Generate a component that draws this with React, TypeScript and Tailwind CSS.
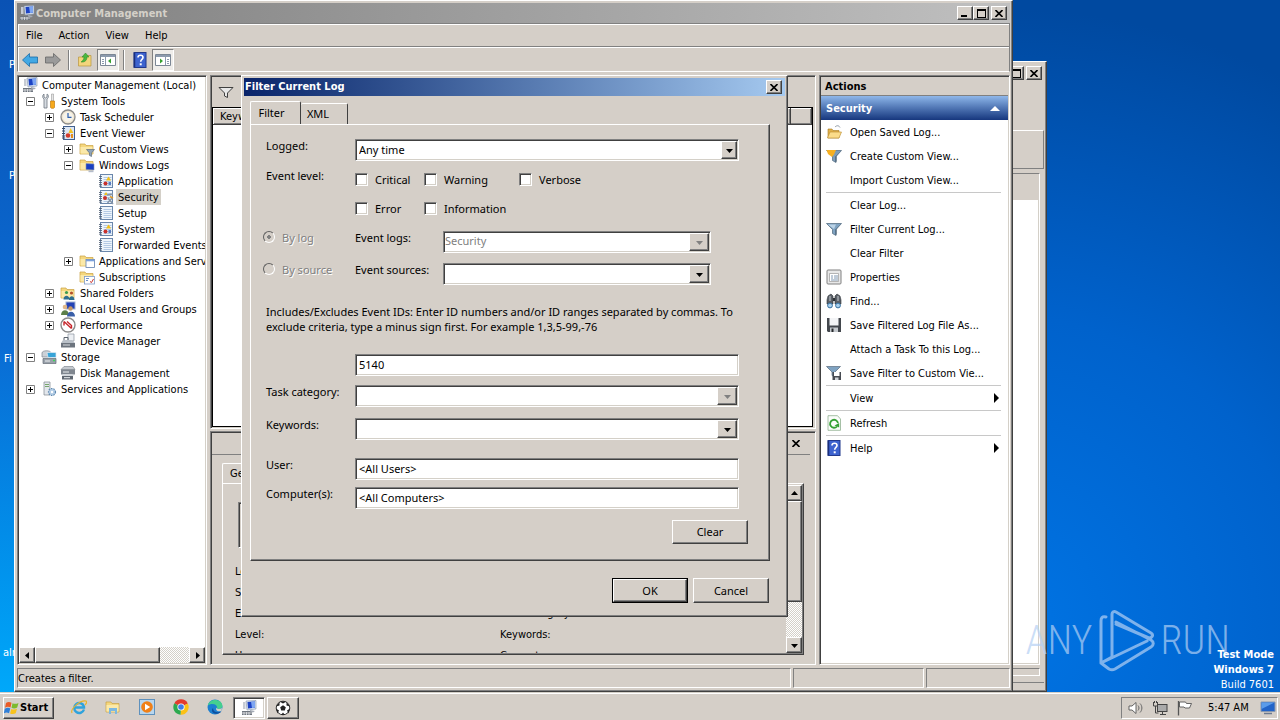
import { useState, type ReactNode } from 'react'

const raised =
  'bg-[#d5cfc8] border border-t-white border-l-white border-b-[#404040] border-r-[#404040] shadow-[inset_-1px_-1px_0_#808080]'
const sunken =
  'border border-t-[#808080] border-l-[#808080] border-b-white border-r-white shadow-[inset_1px_1px_0_#404040,inset_-1px_-1px_0_#d4d0c8]'

/* ---------- Icons ---------- */

function Svg({ children, size = 16 }: { children: ReactNode; size?: number }) {
  return (
    <svg width={size} height={size} viewBox="0 0 16 16" fill="none" className="shrink-0" aria-hidden="true">
      {children}
    </svg>
  )
}

const folder = (
  <>
    <path d="M1 3h5l1 1.5h7V13H1z" fill="#f5d77e" stroke="#c9a042" strokeWidth=".7" />
    <path d="M1.5 6h12v6.6h-12z" fill="#fbe9a9" />
  </>
)

const funnel = (fill: string) => (
  <>
    <path d="M.5 2.500h15l-5.500 6v6l-3.500-2V8.500z" fill={fill} stroke="#5b7286" strokeWidth=".8" />
    <path d="M9.500 8.500v5.500l1-.5V8l4-4.500z" fill="#3f566b" />
  </>
)

const logBook = (
  <>
    <rect x="2.5" y="1.5" width="12" height="13" fill="#eef5fc" stroke="#6b87ab" />
    <path d="M5.5 4.5h8M5.5 6.5h8M5.5 8.5h8M5.5 10.5h8M5.5 12.5h8" stroke="#a5bfdd" strokeWidth=".8" />
    <path d="M1 3.5h3M1 5.5h3M1 7.5h3M1 9.5h3M1 11.5h3M1 13.2h3" stroke="#4a5a70" strokeWidth=".8" />
  </>
)

const icons: Record<string, ReactNode> = {
  computer: (
    <>
      <path d="M5 1l10-.5V9L6 10z" fill="#d9e3f0" stroke="#8090a8" strokeWidth=".6" />
      <path d="M6.5 2l7.5-.4v6.2L7 8.6z" fill="#1c43c4" />
      <path d="M10 1.8l4-.2v6.2L11 8z" fill="#7ea6f2" />
      <path d="M2 2h2.5v7H2z" fill="#c7ccd4" />
      <path d="M1 11h10v4H1z" fill="#6f767f" />
      <path d="M3 12v3M5.5 12v3M8 12v3M1 13h10" stroke="#e4e6e9" strokeWidth=".8" />
      <path d="M9 10l5 1-2 1.4-3-.8z" fill="#a4abb5" />
    </>
  ),
  tools: (
    <>
      <path d="M3 1v3l1.5 1L6 4V1c1.8.8 2 3.500 0 5v9H3V6C1.200 5 1.200 2 3 1z" fill="#d7dce2" stroke="#6f7781" strokeWidth=".8" />
      <path d="M10.500 1h2v7h-2z" fill="#e6e6e6" stroke="#8b8b8b" strokeWidth=".5" />
      <path d="M9.500 8h4v6.500l-1 .8h-2l-1-.8z" fill="#f6a91b" stroke="#b86f00" strokeWidth=".6" />
    </>
  ),
  clock: (
    <>
      <circle cx="8" cy="8" r="7" fill="#efe6d2" stroke="#8a8a8a" strokeWidth="1.300" />
      <circle cx="8" cy="8" r="5" fill="#f6f3ea" />
      <path d="M8 4v4.300h3.500" stroke="#2c5fae" strokeWidth="1.200" />
    </>
  ),
  eventViewer: (
    <>
      <rect x="3.500" y="1.500" width="11" height="13" fill="#dbe6f5" stroke="#41608f" />
      <path d="M2 3.500h3M2 6h3M2 8.500h3M2 11h3M2 13h3" stroke="#3c4c62" />
      <circle cx="8" cy="10.500" r="2.300" fill="#d33a2c" />
      <path d="M10.500 3l3 5h-5z" fill="#f4c322" />
      <path d="M11 9h2v4h-2z" fill="#e48f1f" />
    </>
  ),
  customViews: (
    <>
      {folder}
      <path d="M7.500 8.500h8L12.500 12v3.500l-2-1V12z" fill="#8fa3b8" stroke="#4f6072" strokeWidth=".6" />
    </>
  ),
  windowsLogs: (
    <>
      {folder}
      <path d="M7 6.500l8 .5v6l-8-.5z" fill="#1a3fc2" stroke="#8796b5" strokeWidth=".6" />
      <path d="M9.500 13.500h5v1.700h-5z" fill="#b4bccb" />
    </>
  ),
  log: (
    <>
      {logBook}
      <circle cx="7.500" cy="10.500" r="2" fill="#c9302c" />
      <path d="M10.500 3.500l2.600 4H8z" fill="#f2c018" />
      <path d="M10.500 9h2.500v3h-2.500z" fill="#5a7dc0" />
    </>
  ),
  security: (
    <>
      {logBook}
      <circle cx="7" cy="9" r="2" fill="#c9302c" />
      <path d="M8 3l2 3H6z" fill="#f2c018" />
      <path d="M9 6l6-1M9.500 14l5-5.500M10 9l5 6" stroke="#8796a8" strokeWidth="1.500" />
      <path d="M12 7.500l3 1.500" stroke="#e09a2a" strokeWidth="1.500" />
    </>
  ),
  logPlain: logBook,
  appLogs: (
    <>
      {folder}
      <rect x="7" y="6.500" width="8.500" height="8" fill="#fff" stroke="#5f7fb0" strokeWidth=".8" />
      <path d="M7 7.500h8.500" stroke="#7ba0dc" strokeWidth="1.600" />
    </>
  ),
  subscriptions: (
    <>
      {folder}
      <rect x="5.500" y="7.500" width="10" height="7.500" fill="#fff" stroke="#7f9cc8" strokeWidth=".8" />
      <path d="M7 9.500h3M7 11.500h2" stroke="#6d92cc" />
      <path d="M11 12.500l1.500 1L14.500 10" stroke="#c9302c" />
    </>
  ),
  sharedFolders: (
    <>
      {folder}
      <circle cx="6.500" cy="7.500" r="1.600" fill="#3f9b4c" />
      <circle cx="11.500" cy="8" r="1.600" fill="#b4502b" />
      <path d="M3.500 14.500c0-5 6-5 6 0zM9 15c0-5 5.500-5 5.500 0z" fill="#2e6f8f" />
    </>
  ),
  users: (
    <>
      <rect x="6" y="1" width="9" height="7" fill="#2443b6" stroke="#a3b1cf" />
      <circle cx="5" cy="6" r="2.300" fill="#e0b88a" />
      <circle cx="10.500" cy="7.500" r="2.200" fill="#c79966" />
      <path d="M1 14c0-6.500 8-6.500 8 0z" fill="#5c7f48" />
      <path d="M7 15.500c0-6.500 8-6.500 8 0z" fill="#3a5fa8" />
    </>
  ),
  performance: (
    <>
      <circle cx="8" cy="8" r="7" fill="#fff" stroke="#8a8a8a" strokeWidth="1.400" />
      <path d="M4 4.500v4M4 4.500l7.500 7M7 4.500l4.500 4v3" stroke="#c7262b" strokeWidth="1.400" />
    </>
  ),
  device: (
    <>
      <path d="M8 1h6v7H8z" fill="#eceff3" stroke="#8b939d" strokeWidth=".7" />
      <path d="M3 7h9l3 3H1z" fill="#b9c0c8" />
      <path d="M1 10h14v4.500H1z" fill="#6c747e" />
      <path d="M3 12h7" stroke="#d6dade" />
      <path d="M4 7V4.500h4V7" stroke="#5c646e" />
    </>
  ),
  storage: (
    <>
      <path d="M1 4c0-3 9-3 9 0v4H1z" fill="#ccd1d7" stroke="#7d858f" strokeWidth=".7" />
      <path d="M6 3.500h9v5H7z" fill="#38a4d8" stroke="#e3ebf2" strokeWidth=".7" />
      <path d="M2 9.500h13v5H2z" fill="#9aa2ab" stroke="#636b75" strokeWidth=".7" />
      <path d="M4 12h5" stroke="#eef0f2" />
      <path d="M12 11.500h2" stroke="#3fd35b" strokeWidth="1.300" />
    </>
  ),
  disk: (
    <>
      <path d="M4 1.500h9l2 3H1z" fill="#c4c9cf" stroke="#757d87" strokeWidth=".6" />
      <path d="M1 4.500h14v5H1z" fill="#7f868f" />
      <path d="M3 9h9l2 2H2z" fill="#d2d6db" />
      <path d="M2 11h11v3.500H2z" fill="#5e6670" />
      <path d="M3 7h6M4 12.700h6" stroke="#eceef0" />
    </>
  ),
  services: (
    <>
      <path d="M3 1h6v13H3z" fill="#e3e7ec" stroke="#808891" strokeWidth=".7" />
      <path d="M4 3.500h4M4 5.500h4" stroke="#77a66b" />
      <circle cx="11" cy="11" r="3.500" fill="#b3cde6" stroke="#6089b0" strokeWidth="1.200" strokeDasharray="1.500 1" />
      <circle cx="11" cy="11" r="1.200" fill="#fff" />
    </>
  ),
  openLog: (
    <>
      <path d="M2 5h4l1 1.500h6V14H2z" fill="#e0b04a" stroke="#a57a20" strokeWidth=".6" />
      <path d="M4 8h11.500L13 14H1.500z" fill="#fbdc8a" stroke="#b98c2e" strokeWidth=".6" />
      <path d="M9 3c2-2 4-1.500 5 .5" stroke="#8f9aa6" />
    </>
  ),
  createView: (
    <>
      {funnel('#7d9cb8')}
      <path d="M.5 2h9.500L8 6.500 6 9 2 6z" fill="#f7b021" />
    </>
  ),
  filter: (
    <>
      {funnel('#7fa3c2')}
      <path d="M2 3.500h8L8 8z" fill="#bcd3e6" />
    </>
  ),
  properties: (
    <>
      <rect x="1" y="1" width="14" height="14" rx="1" fill="#e8e8e8" stroke="#808080" />
      <path d="M3.500 4.500h9v8h-9z" fill="#fff" stroke="#9a9a9a" strokeWidth=".7" />
      <path d="M5 7h2M8 7h4M5 9h2M8 9h4M5 11h7" stroke="#5f7f9f" strokeWidth=".8" />
    </>
  ),
  find: (
    <>
      <path d="M2 3l3-2 2 2v8H1V7zM14 3l-3-2-2 2v8h6V7z" fill="#5a6068" stroke="#2d3238" strokeWidth=".6" />
      <path d="M7 5h2v3H7z" fill="#2d3238" />
      <path d="M4 3v5M12 3v5" stroke="#c7ccd2" />
      <circle cx="4" cy="12.500" r="2.400" fill="#a8d0ee" stroke="#326ea0" />
      <circle cx="12" cy="12.500" r="2.400" fill="#a8d0ee" stroke="#326ea0" />
    </>
  ),
  save: (
    <>
      <path d="M1 1h14v14H2l-1-1z" fill="#43474d" />
      <path d="M3.500 1h9v7.500h-9z" fill="#f3f4f6" />
      <path d="M4 10.500h8V15H4z" fill="#c5c9ce" />
      <path d="M5.500 11.500h2V15h-2z" fill="#25282c" />
    </>
  ),
  saveFilter: (
    <>
      <path d="M.5 1.500h14L9 7v5l-3-1.500V7z" fill="#7fa3c2" stroke="#5b6b7c" strokeWidth=".7" />
      <path d="M6.500 7h8.500v8H6.500z" fill="#474b52" />
      <path d="M8 7h5.500v4H8z" fill="#fff" />
      <path d="M9 12.500h3.500V15H9z" fill="#d0d4d9" />
    </>
  ),
  refresh: (
    <>
      <path d="M2 .7h9.500L14.500 4v11.300H2z" fill="#fbfdfb" stroke="#8fb08f" strokeWidth=".8" />
      <path d="M11 11.500a4 4 0 1 1 1-3.500" stroke="#35a135" strokeWidth="1.800" />
      <path d="M13.200 8v4.500L8.500 10.500z" fill="#35a135" />
    </>
  ),
  help: (
    <>
      <rect x="2" y=".5" width="12" height="15" fill="#3d63cf" stroke="#21388c" />
      <path d="M2.500 1v14" stroke="#1b2f7a" strokeWidth="1.500" />
      <path d="M6 5.500c0-3 5-3 5 0 0 2-2.300 1.800-2.300 4.200" stroke="#fff" strokeWidth="1.600" />
      <path d="M7.700 11.300h2v2h-2z" fill="#fff" />
    </>
  ),
  back: <path d="M.5 8L7.500 1.500V5H15.500v6H7.500v3.500z" fill="#42a8e4" stroke="#1a6ba6" strokeWidth=".8" />,
  forward: <path d="M15.500 8L8.500 1.500V5H.5v6h8v3.500z" fill="#9a9a9a" stroke="#666" strokeWidth=".8" />,
  upFolder: (
    <>
      <path d="M1.500 5h5l1-1.500H14V14H1.500z" fill="#f3d57c" stroke="#b9953f" strokeWidth=".7" />
      <path d="M4 10c1-1 3-2 3-5H5l3.500-4L12 5h-2c0 4-3 5.500-6 5z" fill="#49b83f" stroke="#2a8423" strokeWidth=".5" />
    </>
  ),
  paneLeft: (
    <>
      <path d="M.5 2.500h15v11H.5z" fill="#fff" stroke="#7c8795" />
      <path d="M1 4h14" stroke="#8c9aad" strokeWidth="2" />
      <path d="M5.500 5v8M2 7.500h2M2 9.500h2M2 11.500h2" stroke="#8c9aad" />
      <path d="M11 6.500v5L8 9z" fill="#36a12f" />
    </>
  ),
  paneRight: (
    <>
      <path d="M.5 2.500h15v11H.5z" fill="#fff" stroke="#7c8795" />
      <path d="M1 4h14" stroke="#8c9aad" strokeWidth="2" />
      <path d="M10.500 5v8M12 7.500h2M12 9.500h2M12 11.500h2" stroke="#8c9aad" />
      <path d="M5 6.500v5L8 9z" fill="#36a12f" />
    </>
  ),
}

function Icon({ name, size }: { name: string; size?: number }) {
  return <Svg size={size}>{icons[name]}</Svg>
}

function Arrow({ dir, color = '#000' }: { dir: 'up' | 'down' | 'left' | 'right'; color?: string }) {
  const paths = { up: 'M0 5h7L3.500 1z', down: 'M0 2h7L3.500 6z', left: 'M5 0v7L1 3.500z', right: 'M2 0v7l4-3.500z' }
  return (
    <svg width="7" height="7" viewBox="0 0 7 7" className="shrink-0" aria-hidden="true">
      <path d={paths[dir]} fill={color} />
    </svg>
  )
}

function Cross() {
  return (
    <svg width="8" height="7" viewBox="0 0 8 7" aria-hidden="true">
      <path d="M.5 0l7 7M7.500 0l-7 7" stroke="#000" strokeWidth="1.600" />
    </svg>
  )
}

/* ---------- Window parts ---------- */

function CaptionButton({ kind }: { kind: 'min' | 'max' | 'close' }) {
  return (
    <button type="button" aria-label={kind} className={`${raised} flex h-[14px] w-[16px] items-center justify-center`}>
      {kind === 'close' && <Cross />}
      {kind === 'max' && <span className="h-[9px] w-[9px] border border-t-2 border-black" />}
      {kind === 'min' && <span className="mt-[6px] mr-[2px] h-[2px] w-[6px] bg-black" />}
    </button>
  )
}

interface TreeNode {
  level: number
  label: string
  icon: string
  toggle?: '+' | '-'
}

const indents = ['pl-[3px]', 'pl-[7px]', 'pl-[26px]', 'pl-[45px]', 'pl-[64px]']

const tree: TreeNode[] = [
  { level: 0, label: 'Computer Management (Local)', icon: 'computer' },
  { level: 1, label: 'System Tools', icon: 'tools', toggle: '-' },
  { level: 2, label: 'Task Scheduler', icon: 'clock', toggle: '+' },
  { level: 2, label: 'Event Viewer', icon: 'eventViewer', toggle: '-' },
  { level: 3, label: 'Custom Views', icon: 'customViews', toggle: '+' },
  { level: 3, label: 'Windows Logs', icon: 'windowsLogs', toggle: '-' },
  { level: 4, label: 'Application', icon: 'log' },
  { level: 4, label: 'Security', icon: 'security' },
  { level: 4, label: 'Setup', icon: 'logPlain' },
  { level: 4, label: 'System', icon: 'log' },
  { level: 4, label: 'Forwarded Events', icon: 'logPlain' },
  { level: 3, label: 'Applications and Services Logs', icon: 'appLogs', toggle: '+' },
  { level: 3, label: 'Subscriptions', icon: 'subscriptions' },
  { level: 2, label: 'Shared Folders', icon: 'sharedFolders', toggle: '+' },
  { level: 2, label: 'Local Users and Groups', icon: 'users', toggle: '+' },
  { level: 2, label: 'Performance', icon: 'performance', toggle: '+' },
  { level: 2, label: 'Device Manager', icon: 'device' },
  { level: 1, label: 'Storage', icon: 'storage', toggle: '-' },
  { level: 2, label: 'Disk Management', icon: 'disk' },
  { level: 1, label: 'Services and Applications', icon: 'services', toggle: '+' },
]

function Toggle({ sign }: { sign?: '+' | '-' }) {
  if (!sign) return <span className="mr-[6px] w-[9px] shrink-0" />
  return (
    <svg width="9" height="9" viewBox="0 0 9 9" className="mr-[6px] shrink-0" aria-hidden="true">
      <path d="M.5.5h8v8h-8z" fill="#fff" stroke="#808080" />
      <path d={sign === '+' ? 'M2 4.500h5M4.500 2v5' : 'M2 4.500h5'} stroke="#000" />
    </svg>
  )
}

const dither = 'bg-[repeating-conic-gradient(#fff_0_25%,#d4d0c8_0_50%)] bg-[length:2px_2px]'

function TreePane() {
  return (
    <nav className={`${sunken} flex w-[190px] shrink-0 flex-col bg-white p-px`}>
      <ul className="min-h-0 flex-1 overflow-hidden">
        {tree.map((node) => (
          <li key={node.label} className={`flex h-4 items-center ${indents[node.level]}`}>
            {node.level > 0 && <Toggle sign={node.toggle} />}
            <Icon name={node.icon} />
            <a
              href="#"
              className={`ml-[2px] h-4 px-[2px] leading-[18px] whitespace-nowrap ${
                node.label === 'Security' ? 'bg-[#d4d0c8]' : ''
              }`}
            >
              {node.label}
            </a>
          </li>
        ))}
      </ul>
      <div className={`${dither} flex h-4 justify-between`}>
        <div className="flex">
          <button type="button" aria-label="Scroll left" className={`${raised} flex w-4 items-center justify-center`}>
            <Arrow dir="left" />
          </button>
          <div className={`${raised} w-[125px]`} />
        </div>
        <button type="button" aria-label="Scroll right" className={`${raised} flex w-4 items-center justify-center`}>
          <Arrow dir="right" />
        </button>
      </div>
    </nav>
  )
}

const details = [
  ['Log Name:', ''],
  ['Source:', 'Logged:'],
  ['Event ID:', 'Task Category:'],
  ['Level:', 'Keywords:'],
  ['User:', 'Computer:'],
]

function EventsPane() {
  return (
    <main className="flex min-w-0 flex-1 flex-col gap-[2px]">
      <section className={`${sunken} flex h-[354px] flex-col p-px`}>
        <div className="flex h-[30px] items-center pl-[6px]">
          <Svg>
            <path d="M1 3.500h14L9.500 9v4.500l-3-1.500V9z" fill="#e8e8e8" stroke="#404040" />
          </Svg>
        </div>
        <div className="mr-px flex-1 border border-black bg-white">
          <table className="w-full table-fixed border-collapse">
            <thead>
              <tr className="h-4 text-left">
                <th className={`${raised} w-[577px] py-0 pl-[6px] leading-[14px] font-normal`}>Keywords</th>
                <th className={raised} aria-label="Source" />
              </tr>
            </thead>
          </table>
        </div>
      </section>
      <section className={`${sunken} flex min-h-0 flex-1 flex-col p-px`}>
        <div className="mr-1 flex h-[22px] items-center justify-end border-b border-[#808080] pr-[10px]">
          <button type="button" aria-label="Close preview">
            <Cross />
          </button>
        </div>
        <div className="flex min-h-0 flex-1 flex-col items-start px-[10px] pt-2 pb-2">
          <button
            type="button"
            className="h-5 rounded-t-[2px] border border-b-0 border-t-white border-l-white border-r-[#404040] px-[7px]"
          >
            General
          </button>
          <div className={`${raised} flex min-h-0 w-full flex-1 p-px`}>
            <div className="min-w-0 flex-1 overflow-hidden pt-[17px] pl-[14px]">
              <div className={`${sunken} mr-[14px] h-[46px]`} />
              <dl className="-ml-[3px] pt-[13px]">
                {details.map(([left, right]) => (
                  <div key={left} className="flex h-[21px] items-center">
                    <dt className="w-[265px]">{left}</dt>
                    <dt>{right}</dt>
                  </div>
                ))}
              </dl>
            </div>
            <div className={`${dither} flex w-4 flex-col`}>
              <button type="button" aria-label="Scroll up" className={`${raised} flex h-4 items-center justify-center`}>
                <Arrow dir="up" />
              </button>
              <div className={`${raised} h-[101px]`} />
              <button
                type="button"
                aria-label="Scroll down"
                className={`${raised} mt-auto flex h-4 items-center justify-center`}
              >
                <Arrow dir="down" />
              </button>
            </div>
          </div>
        </div>
      </section>
    </main>
  )
}

interface Action {
  label: string
  icon?: string
  submenu?: boolean
}

const actionGroups: Action[][] = [
  [
    { label: 'Open Saved Log...', icon: 'openLog' },
    { label: 'Create Custom View...', icon: 'createView' },
    { label: 'Import Custom View...' },
  ],
  [
    { label: 'Clear Log...' },
    { label: 'Filter Current Log...', icon: 'filter' },
    { label: 'Clear Filter' },
    { label: 'Properties', icon: 'properties' },
    { label: 'Find...', icon: 'find' },
    { label: 'Save Filtered Log File As...', icon: 'save' },
    { label: 'Attach a Task To this Log...' },
    { label: 'Save Filter to Custom Vie...', icon: 'saveFilter' },
  ],
  [{ label: 'View', submenu: true }],
  [{ label: 'Refresh', icon: 'refresh' }],
  [{ label: 'Help', icon: 'help', submenu: true }],
]

function ActionsPane() {
  return (
    <aside className={`${sunken} w-[191px] shrink-0 bg-white p-px`}>
      <h2 className="h-[19px] border-b border-[#808080] bg-[#d5cfc8] pl-1 leading-5 font-bold">Actions</h2>
      <div className="flex h-6 items-center justify-between bg-linear-to-b from-[#8fb7ea] to-[#17377e] pr-[8px] pl-[5px]">
        <h3 className="pt-px font-bold text-white">Security</h3>
        <svg width="10" height="5" viewBox="0 0 10 5" aria-hidden="true">
          <path d="M0 5h10L5 0z" fill="#fff" />
        </svg>
      </div>
      <div className="divide-y divide-[#c8c8c8] pr-[7px] pl-[5px]">
        {actionGroups.map((group) => (
          <ul key={group[0].label}>
            {group.map((action) => (
              <li key={action.label}>
                <button type="button" className="flex h-6 w-full items-center gap-2 text-left whitespace-nowrap">
                  {action.icon ? <Icon name={action.icon} /> : <span className="w-4 shrink-0" />}
                  <span className="flex-1 pt-[2px]">{action.label}</span>
                  {action.submenu && (
                    <svg width="8" height="10" viewBox="0 0 8 10" aria-hidden="true">
                      <path d="M1 0v10l5-5z" fill="#000" />
                    </svg>
                  )}
                </button>
              </li>
            ))}
          </ul>
        ))}
      </div>
    </aside>
  )
}

function ToolbarButton({ icon, pressed }: { icon: string; pressed?: boolean }) {
  return (
    <button
      type="button"
      aria-label={icon}
      className={`flex h-[22px] w-[22px] items-center justify-center ${
        pressed ? 'border border-t-[#808080] border-l-[#808080] border-b-white border-r-white bg-[#efedea]' : ''
      }`}
    >
      <Icon name={icon} />
    </button>
  )
}

function ToolbarRule() {
  return <span className="mx-[3px] h-5 w-[2px] border-l border-[#808080] bg-white" />
}

function ManagementWindow() {
  return (
    <div className={`${raised} absolute top-0 right-[267px] bottom-0 left-[14px] flex flex-col p-[2px] pb-[3px]`}>
      <header className="flex h-5 items-center bg-linear-to-r from-[#808080] to-[#c0c0c0] pr-[3px] pl-[2px] text-[#d4d0c8]">
        <Icon name="computer" />
        <h1 className="ml-px flex-1 pt-px font-bold">Computer Management</h1>
        <CaptionButton kind="min" />
        <CaptionButton kind="max" />
        <span className="w-[2px]" />
        <CaptionButton kind="close" />
      </header>
      <div className="flex h-6 items-center gap-4 border border-[#808080] pt-[2px] pl-2 shadow-[inset_1px_1px_0_#fff]">
        {['File', 'Action', 'View', 'Help'].map((item) => (
          <button key={item} type="button">
            {item}
          </button>
        ))}
      </div>
      <div className="flex h-[25px] items-center gap-px border border-t-0 border-l-[#808080] border-r-[#808080] border-b-white pt-px pl-px shadow-[inset_1px_1px_0_#fff]">
        <ToolbarButton icon="back" />
        <ToolbarButton icon="forward" />
        <ToolbarRule />
        <ToolbarButton icon="upFolder" />
        <ToolbarButton icon="paneLeft" pressed />
        <ToolbarRule />
        <ToolbarButton icon="help" />
        <ToolbarButton icon="paneRight" pressed />
      </div>
      <div className="flex min-h-0 flex-1 gap-[3px] py-[3px]">
        <TreePane />
        <EventsPane />
        <ActionsPane />
      </div>
      <footer className="flex h-5 gap-[2px] leading-5">
        <div className="flex-1 border border-t-[#808080] border-l-[#808080] border-b-white border-r-white">
          Creates a filter.
        </div>
        <div className="w-[131px] border border-t-[#808080] border-l-[#808080] border-b-white border-r-white" />
        <div className="w-[84px] border border-t-[#808080] border-l-[#808080] border-b-white border-r-white" />
      </footer>
    </div>
  )
}

function BackWindow() {
  return (
    <div className={`${raised} absolute top-[61px] right-[233px] bottom-0 left-[60px] flex flex-col p-[2px]`}>
      <div className="flex h-[18px] items-center justify-end pr-[2px]">
        <CaptionButton kind="max" />
        <span className="w-[2px]" />
        <CaptionButton kind="close" />
      </div>
      <div className="h-12" />
      <div className="h-[39px] border border-t-white border-r-[#808080] border-b-[#808080]" />
      <div className={`${sunken} mt-1 mr-[4px] min-h-0 flex-1 bg-white`}>
        <div className="h-[26px] bg-[#d5cfc8]" />
      </div>
      <div className="mt-[3px] mr-[4px] h-2 border border-t-[#808080] border-b-white border-r-white" />
      <div className="mt-[6px] h-[7px] border-t border-[#808080]" />
    </div>
  )
}

/* ---------- Filter dialog ---------- */

const label = 'leading-[14px] shrink-0'
const field = `${sunken} h-[22px] w-[384px] bg-white px-[3px] pb-px outline-none`

interface ComboProps {
  id: string
  value?: string
  disabled?: boolean
  grey?: boolean
  className: string
  slim?: boolean
}

function Combo({ id, value = '', disabled, grey, className, slim }: ComboProps) {
  return (
    <div className={`${sunken} flex h-[22px] bg-white p-px ${className}`}>
      <select
        id={id}
        disabled={disabled}
        className={`min-w-0 flex-1 appearance-none outline-none ${grey ? 'pb-[3px] text-[#808080]' : 'pl-[2px] text-black'}`}
      >
        <option>{value}</option>
      </select>
      <span className={`${raised} flex items-center justify-center ${slim ? 'w-4' : 'w-[20px]'}`}>
        <Arrow dir="down" color={disabled ? '#808080' : '#000'} />
      </span>
    </div>
  )
}

function Check({ text, className = '' }: { text: string; className?: string }) {
  return (
    <label className={`flex h-[14px] items-start gap-[7px] ${className}`}>
      <input
        type="checkbox"
        className={`${sunken} h-[13px] w-[13px] shrink-0 appearance-none bg-white checked:bg-[#0a246a]`}
      />
      <span className="leading-[14px]">{text}</span>
    </label>
  )
}

function Radio({ text, checked }: { text: string; checked?: boolean }) {
  return (
    <label className="-ml-[3px] flex w-[92px] items-start gap-[7px] text-[#808080]">
      <input
        type="radio"
        name="scope"
        defaultChecked={checked}
        disabled
        className="h-3 w-3 shrink-0 appearance-none rounded-full border border-t-[#606060] border-l-[#606060] border-b-white border-r-white checked:bg-[radial-gradient(#808080_2px,transparent_2px)]"
      />
      <span className="leading-[14px] [text-shadow:1px_1px_0_#fff]">{text}</span>
    </label>
  )
}

function FilterDialog() {
  const [ids, setIds] = useState('5140')
  const [user, setUser] = useState('<All Users>')
  const [computers, setComputers] = useState('<All Computers>')

  return (
    <div
      role="dialog"
      aria-label="Filter Current Log"
      className={`${raised} absolute top-[75px] left-[241px] w-[547px] p-[2px] [font-family:'Noto_Sans',sans-serif]`}
    >
      <header className="flex h-[18px] items-center justify-between bg-linear-to-r from-[#0a246a] to-[#a6caf0] pr-[3px] pl-px [font-family:'DejaVu_Sans_Condensed',sans-serif]">
        <h2 className="font-bold text-white">Filter Current Log</h2>
        <CaptionButton kind="close" />
      </header>
      <form className="px-[6px] pt-[5px] pb-[11px]" onSubmit={(e) => e.preventDefault()}>
        <div className="flex items-end">
          <button
            type="button"
            className="h-[23px] w-[51px] rounded-t-[2px] border border-b-0 border-t-white border-l-white border-r-[#404040] pr-[8px]"
          >
            Filter
          </button>
          <button
            type="button"
            className="h-[21px] w-[47px] rounded-t-[2px] border border-b-0 border-l-0 border-t-white border-r-[#404040] pr-[12px]"
          >
            XML
          </button>
        </div>
        <div className={`${raised} h-[437px] w-[520px] pt-[14px] pl-[15px]`}>
          <div className="flex">
            <label htmlFor="logged" className={`${label} w-[89px]`}>
              Logged:
            </label>
            <Combo id="logged" value="Any time" slim className="w-[384px]" />
          </div>
          <div className="mt-2 flex">
            <span className={`${label} w-[89px]`}>Event level:</span>
            <div className="flex flex-col gap-[15px] pt-[4px]">
              <div className="flex">
                <Check text="Critical" className="w-[69px]" />
                <Check text="Warning" className="w-[95px]" />
                <Check text="Verbose" />
              </div>
              <div className="flex">
                <Check text="Error" className="w-[69px]" />
                <Check text="Information" />
              </div>
            </div>
          </div>
          <div className="mt-[15px] flex">
            <Radio text="By log" checked />
            <label htmlFor="logs" className={`${label} w-[88px]`}>
              Event logs:
            </label>
            <Combo id="logs" value="Security" disabled grey className="w-[268px]" />
          </div>
          <div className="mt-[10px] flex">
            <Radio text="By source" />
            <label htmlFor="sources" className={`${label} w-[88px]`}>
              Event sources:
            </label>
            <Combo id="sources" className="w-[268px]" />
          </div>
          <p className="mt-[19px] w-[480px] leading-[15px]">
            Includes/Excludes Event IDs: Enter ID numbers and/or ID ranges separated by commas. To exclude criteria, type
            a minus sign first. For example 1,3,5-99,-76
          </p>
          <input
            aria-label="Event IDs"
            value={ids}
            onChange={(e) => setIds(e.target.value)}
            className={`${field} mt-[20px] ml-[89px] block`}
          />
          <div className="mt-[9px] flex">
            <label htmlFor="category" className={`${label} w-[89px]`}>
              Task category:
            </label>
            <Combo id="category" disabled className="w-[384px]" />
          </div>
          <div className="mt-[11px] flex">
            <label htmlFor="keywords" className={`${label} w-[89px]`}>
              Keywords:
            </label>
            <Combo id="keywords" className="w-[384px]" />
          </div>
          <div className="mt-[18px] flex">
            <label htmlFor="user" className={`${label} w-[89px]`}>
              User:
            </label>
            <input id="user" value={user} onChange={(e) => setUser(e.target.value)} className={field} />
          </div>
          <div className="mt-[7px] flex">
            <label htmlFor="computers" className={`${label} w-[89px]`}>
              Computer(s):
            </label>
            <input id="computers" value={computers} onChange={(e) => setComputers(e.target.value)} className={field} />
          </div>
          <div className="mt-[11px] flex justify-end pr-[21px]">
            <button type="button" className={`${raised} h-6 w-[76px]`}>
              Clear
            </button>
          </div>
        </div>
        <div className="mt-[17px] flex justify-end gap-[5px] pr-[10px]">
          <button type="submit" className="h-[25px] w-[76px] border border-black">
            <span className={`${raised} flex h-full items-center justify-center`}>OK</span>
          </button>
          <button type="button" className={`${raised} h-[25px] w-[76px]`}>
            Cancel
          </button>
        </div>
      </form>
    </div>
  )
}

/* ---------- Desktop ---------- */

function Watermark() {
  return (
    <div className="absolute right-[50px] bottom-[20px] flex items-center gap-[6px] text-[40px] leading-none text-[#b4d0f4]/70 [font-family:'Roboto_Condensed','Liberation_Sans_Narrow',sans-serif]">
      <span className="font-light">ANY</span>
      <svg width="56" height="62" viewBox="0 0 56 62" fill="none" aria-hidden="true">
        <path
          d="M7 7C3 6 2 8 2 11v42l11-6V4c0-2 2-3 4-2l35 21c3 2 1 5-2 5L17 14M2 53l8 6c2 1 4 1 6 0l36-22c3-2 3-5 0-7L17 12M2 53l46-22"
          stroke="currentColor"
          strokeWidth="3"
          strokeLinejoin="round"
          strokeLinecap="round"
        />
      </svg>
      <span className="font-light">RUN</span>
    </div>
  )
}

function Taskbar() {
  return (
    <footer className="flex h-7 shrink-0 items-center border-t border-[#d4d0c8] bg-[#d5cfc8] pr-[2px] pl-[3px] shadow-[inset_0_1px_0_#fff]">
      <button type="button" className={`${raised} mt-[2px] flex h-[22px] w-[51px] items-center font-bold`}>
        <Svg>
          <path d="M2 3c2-1.500 4-1 5.500-.2L6.500 7.500C5 6.700 3 6.500 1 7.700z" fill="#ea5b25" />
          <path d="M8.500 3.300c2 .9 4 .7 6-.3l-1.300 4.600c-1.800 1-4 1.200-5.700.2z" fill="#7cba2d" />
          <path d="M.8 8.800C3 7.500 5 7.700 6.300 8.500L5 13.200c-1.500-.8-3.500-.9-5.200.2z" fill="#2f7fd8" />
          <path d="M7.300 9c2 .9 4 .6 5.700-.3l-1.300 4.600c-1.700 1-4 1-5.600.1z" fill="#f8c31c" />
        </Svg>
        Start
      </button>
      <div className="ml-[17px] flex items-center gap-[18px]">
        <button type="button" aria-label="Internet Explorer">
          <Svg>
            <path d="M13 10.500A5 5 0 1 1 13 7.500v1H4.500" stroke="#2fa3dc" strokeWidth="2.400" />
            <path d="M1 14C-1 10 9 1 15 2c1 1 0 3-1 4" stroke="#e8b42c" strokeWidth="1.200" />
          </Svg>
        </button>
        <button type="button" aria-label="Explorer">
          <Svg>
            {folder}
            <path d="M4 9h8v6h-2v-3H6v3H4z" fill="#7db8e0" />
          </Svg>
        </button>
        <button type="button" aria-label="Media Player">
          <Svg>
            <rect x=".5" y=".5" width="15" height="15" fill="#b8d6ee" stroke="#5e91bd" />
            <circle cx="8" cy="8" r="5.800" fill="#f08018" />
            <path d="M6 4.800v6.400L11.200 8z" fill="#fff" />
          </Svg>
        </button>
        <button type="button" aria-label="Chrome">
          <Svg>
            <path d="M8 8L1.300 4.200A7.700 7.700 0 0 1 14.800 4.500z" fill="#e33b2e" />
            <path d="M8 8l6.800-3.500A7.700 7.700 0 0 1 7.500 15.700z" fill="#fbc116" />
            <path d="M8 8l-.5 7.700A7.700 7.700 0 0 1 1.300 4.200z" fill="#2da94f" />
            <circle cx="8" cy="8" r="3.600" fill="#fff" />
            <circle cx="8" cy="8" r="2.800" fill="#3f7de8" />
          </Svg>
        </button>
        <button type="button" aria-label="Edge">
          <Svg>
            <circle cx="8" cy="8" r="7.500" fill="#1c7fd0" />
            <path d="M.8 6.500C2-1 15-1 15.500 7c0 3-4 3.500-5.500 2.500C11 6 6 3 .8 6.500z" fill="#45cf8f" />
            <path d="M6 9c0 4 4 5 8.500 3.500C10 17 2 14 6 9z" fill="#0e4f9e" />
            <path d="M9 8.500c1 2 4 1.500 6 .5l-.5 3c-3 1-6 0-5.500-3.500z" fill="#d4d0c8" />
          </Svg>
        </button>
      </div>
      <button
        type="button"
        aria-label="Computer Management"
        className={`${sunken} mt-[2px] ml-[10px] flex h-[22px] w-8 items-center justify-center bg-white`}
      >
        <Icon name="computer" />
      </button>
      <button
        type="button"
        aria-label="Football"
        className={`${raised} mt-[2px] ml-[2px] flex h-[22px] w-8 items-center justify-center`}
      >
        <Svg>
          <circle cx="8" cy="8" r="6.800" fill="#fff" stroke="#333" />
          <path d="M8 5.200l2.800 2-1 3.200H6.200l-1-3.200z" fill="#222" />
          <path d="M4.500 1.500L8 3.500l3.500-2zM1 6.500l3.500-1L4.500 2zM15 6.500l-3.500-1L11.500 2zM2.500 13.500l1.500-3L1 8.500zM13.500 13.500l-1.500-3 3-2z" fill="#222" />
          <path d="M6 15l2-2.500 2 2.500z" fill="#222" />
        </Svg>
      </button>
      <div className="mt-[2px] ml-auto flex h-[22px] w-[157px] items-center border border-t-[#808080] border-l-[#808080] border-b-white border-r-white pl-[6px]">
        <Svg>
          <path d="M1 6h3l4-3.500v11L4 10H1z" fill="#fff" stroke="#555" strokeWidth=".9" />
          <path d="M10 5.500c1.300 1.500 1.300 3.500 0 5M12 3.500c2.500 2.500 2.500 6.500 0 9" stroke="#666" />
        </Svg>
        <span className="w-2" />
        <Svg>
          <rect x="5.500" y="4.500" width="9.500" height="7" fill="#aaa" stroke="#444" />
          <path d="M8 14.500h6M10.500 12v2" stroke="#444" />
          <path d="M1.500 2v4h4V2M2.500 1v2M4.500 1v2M3.500 6v7h3" stroke="#444" />
        </Svg>
        <span className="w-2" />
        <Svg>
          <path d="M2.500 1v14.500" stroke="#555" strokeWidth="1.300" />
          <path d="M3.500 2h6l1 1.500h5L13.500 8H9L8 7H3.500z" fill="#fff" stroke="#555" strokeWidth=".9" />
        </Svg>
        <span className="ml-4 flex-1 whitespace-nowrap">5:47 AM</span>
        <svg width="16" height="16" viewBox="0 0 16 16" className="mr-px" aria-hidden="true">
          <path d="M1 2h14v9.500H1z" fill="#2264c8" stroke="#8898b0" />
          <path d="M1.500 2.500h13L1.500 9z" fill="#5b9cea" />
          <path d="M4 13.500h8" stroke="#6c7a90" strokeWidth="1.500" />
        </svg>
      </div>
    </footer>
  )
}

export default function App() {
  return (
    <div className="flex h-screen flex-col overflow-hidden text-[11px] leading-[14px] text-black [font-family:'DejaVu_Sans_Condensed',sans-serif]">
      <div className="relative min-h-0 flex-1 overflow-hidden bg-linear-to-b from-[#0a52b4] via-[#0a6cd4] to-[#00a8fa]">
        <div className="absolute inset-y-0 right-0 w-[280px] bg-[radial-gradient(circle_at_0%_90%,#0074e4_0%,#0062cc_45%,#0049a0_90%)]" />
        <span className="absolute top-[58px] left-[9px] text-white">P</span>
        <span className="absolute top-[169px] left-[9px] text-white">P</span>
        <span className="absolute top-[352px] left-[4px] text-white">Fi</span>
        <span className="absolute top-[646px] left-[3px] text-white">alr</span>
        <BackWindow />
        <ManagementWindow />
        <FilterDialog />
        <Watermark />
        <div className="absolute right-[6px] bottom-0 text-right leading-[15px] text-white">
          <p className="font-bold">Test Mode</p>
          <p className="font-bold">Windows 7</p>
          <p>Build 7601</p>
        </div>
      </div>
      <Taskbar />
    </div>
  )
}
